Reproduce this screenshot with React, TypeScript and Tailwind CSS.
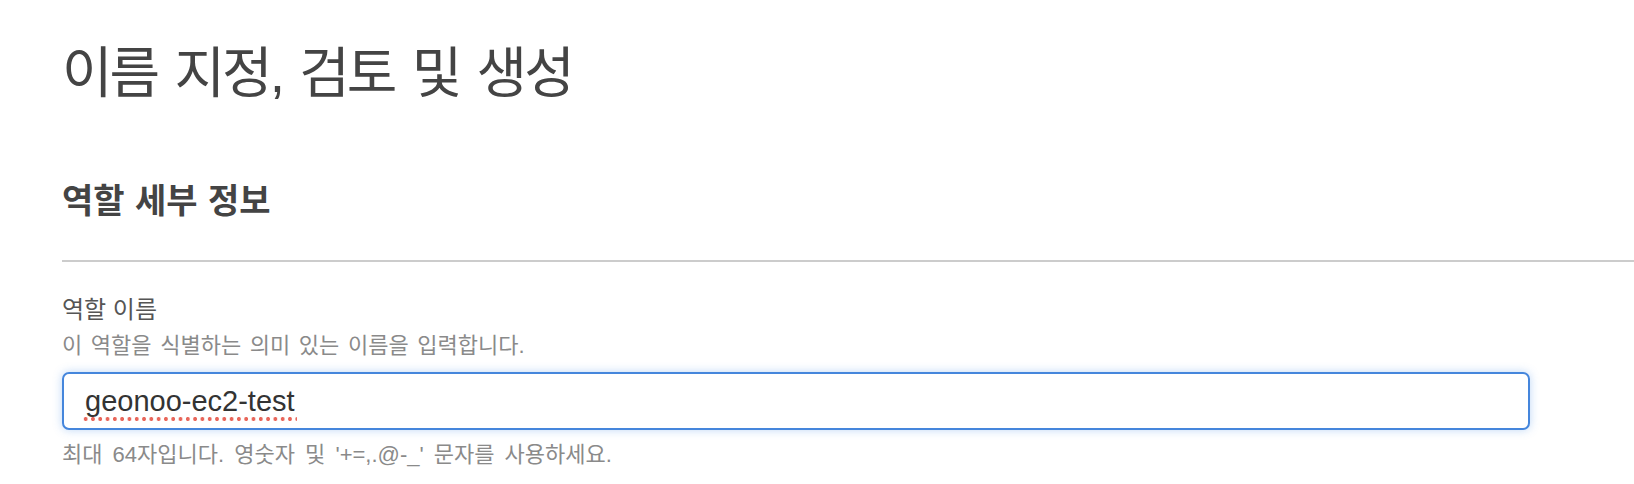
import React from "react";

const FONT = "font-['Liberation_Sans','Noto_Sans_CJK_KR',sans-serif]";

export default function App() {
  return (
    <div className={`min-h-screen bg-white pl-[62px] pt-[46px] ${FONT}`}>
      <h1 className="text-[55px] leading-[55px] tracking-[-3px] [word-spacing:5px] font-normal text-[#444]">
        이름 지정, 검토 및 생성
      </h1>

      <h2 className="mt-[83px] text-[34px] leading-[34px] font-bold text-[#444] [word-spacing:1px]">
        역할 세부 정보
      </h2>

      <div className="mt-[42px] h-[2px] bg-[#cccccc]" />

      <div className="mt-[36px] pr-[104px]">
        <label className="block text-[24px] leading-[24px] text-[#555]">역할 이름</label>
        <p className="mt-[13px] text-[22px] leading-[21px] text-[#8a8a8a] [word-spacing:2.5px]">
          이 역할을 식별하는 의미 있는 이름을 입력합니다.
        </p>

        <div className="mt-[16px] h-[58px] flex items-center rounded-[7px] border-2 border-[#4586dc] bg-white px-[21px] shadow-[0_0_10px_rgba(70,140,230,0.35)]">
          <span className="relative text-[29px] leading-[32px] text-[#333]">
            geonoo-ec2-test
            <span className="absolute left-[-3px] right-[-2px] bottom-[-4px] h-[4px] bg-[radial-gradient(circle,#e8665a_1.8px,transparent_2.2px)] bg-[length:7.3px_4px] bg-repeat-x" />
          </span>
        </div>

        <p className="mt-[14px] text-[22px] leading-[21px] text-[#8a8a8a] [word-spacing:4px]">
          최대 64자입니다. 영숫자 및 '+=,.@-_' 문자를 사용하세요.
        </p>
      </div>
    </div>
  );
}
